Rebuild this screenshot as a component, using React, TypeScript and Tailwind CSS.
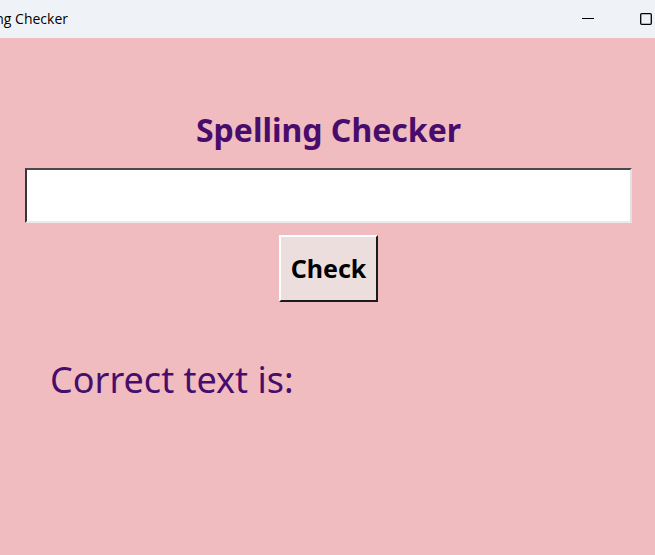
import { useState } from "react";

function TitleBar() {
  return (
    <header className="flex h-[38px] items-center justify-between overflow-hidden bg-[#eff3f8] font-['Segoe_UI','Open_Sans',sans-serif] text-black">
      <div className="flex w-[68px] justify-end overflow-hidden text-sm whitespace-nowrap">
        ng Checker
      </div>
      <div className="flex items-center gap-11 pr-[2px]">
        <button type="button" aria-label="Minimize" className="flex h-8 items-center">
          <svg width="14" height="14" viewBox="0 0 14 14" fill="none" stroke="currentColor">
            <path d="M0 6.5h12" />
          </svg>
        </button>
        <button type="button" aria-label="Maximize" className="flex h-8 items-center">
          <svg width="13" height="14" viewBox="0 0 13 14" fill="none" stroke="currentColor" strokeWidth="1.3">
            <rect x="0.7" y="1.7" width="10.6" height="10.6" rx="1" />
          </svg>
        </button>
      </div>
    </header>
  );
}

export default function App() {
  const [text, setText] = useState("");

  return (
    <div className="flex min-h-screen flex-col bg-[#f0bcc0] font-['Comic_Sans_MS','Noto_Sans',sans-serif] text-[#480d6c]">
      <TitleBar />
      <main className="flex flex-1 flex-col pt-[68px] pr-[23px] pl-[25px]">
        <h1 className="text-center text-[32px] leading-[48px] font-bold">
          <label htmlFor="word">Spelling Checker</label>
        </h1>
        <input
          id="word"
          type="text"
          value={text}
          onChange={(event) => setText(event.target.value)}
          className="mt-[14px] h-[55px] w-full border-2 border-t-[#4b474d] border-r-[#e3e1e2] border-b-[#e8eaeb] border-l-[#39363a] bg-white px-2 text-2xl text-black outline-none"
        />
        <button
          type="button"
          className="mt-3 h-[67px] self-center border-2 border-t-white border-r-[#1c1a1b] border-b-[#1c1a1b] border-l-white bg-[#ecdedd] px-[10px] text-[25px] font-bold text-black"
        >
          Check
        </button>
        <p className="mt-[54px] px-[25px] text-[36px] leading-[48px]">Correct text is:</p>
      </main>
    </div>
  );
}
